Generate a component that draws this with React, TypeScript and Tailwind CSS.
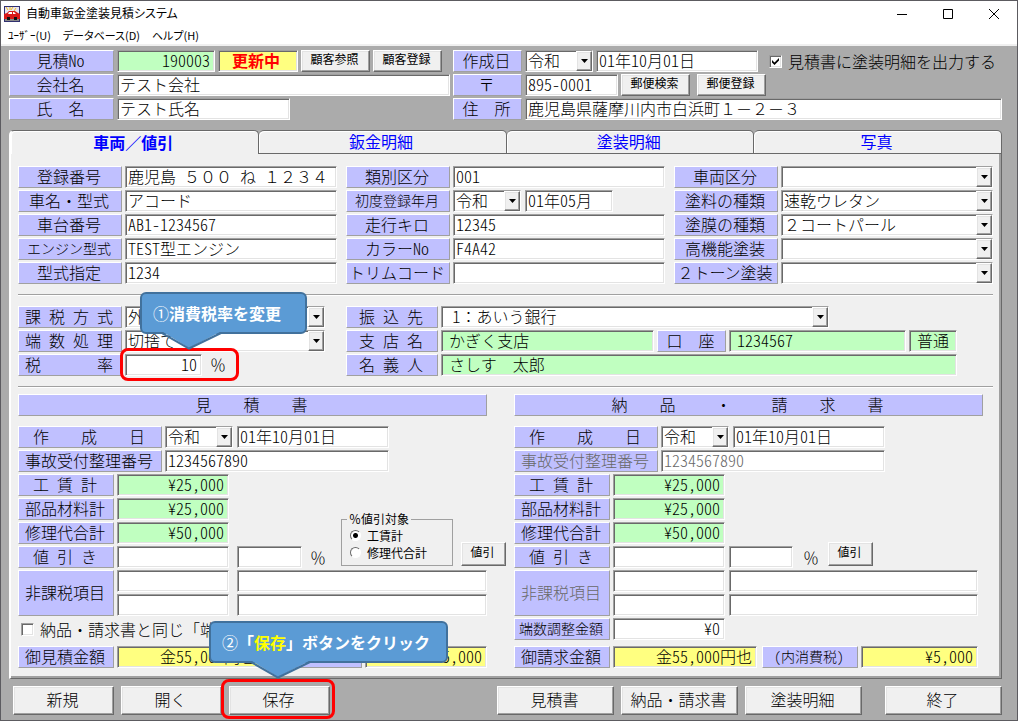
import { useState } from 'react';
import type { ButtonHTMLAttributes, InputHTMLAttributes, ReactNode } from 'react';
import clsx from 'clsx';

const TABS = ['車両／値引', '鈑金明細', '塗装明細', '写真'];

const RAISED =
  'border border-t-white border-l-white border-r-[#696969] border-b-[#696969] shadow-[inset_-1px_-1px_0_#a0a0a0,inset_1px_1px_0_#e3e3e3] bg-[#f0f0f0]';
const SUNKEN =
  'border border-t-[#a0a0a0] border-l-[#a0a0a0] border-r-white border-b-white shadow-[inset_1px_1px_0_#696969,inset_-1px_-1px_0_#e3e3e3]';
// half-width latin, digits and spaces (8px per character at 16px)
const HALF = "[font-feature-settings:'hwid']";

type CaptionProps = { htmlFor?: string; className?: string; wide?: boolean; children: ReactNode };

function Caption({ htmlFor, className, wide, children }: CaptionProps) {
  const cls = clsx(
    'flex items-center justify-center shrink-0 whitespace-pre pr-[2px] pb-[2px] bg-[#c0c0ff] border border-t-white border-l-white border-r-[#a0a0a0] border-b-[#a0a0a0]',
    !wide && HALF,
    className
  );
  return htmlFor ? (
    <label htmlFor={htmlFor} className={cls}>
      {children}
    </label>
  ) : (
    <div className={cls}>{children}</div>
  );
}

type FieldProps = InputHTMLAttributes<HTMLInputElement> & { tone?: string; pad?: string; wide?: boolean };

function Field({ className, tone = 'bg-white', pad = 'pl-[2px]', wide, ...rest }: FieldProps) {
  return (
    <input
      type="text"
      className={clsx(SUNKEN, tone, pad, !wide && HALF, 'h-[22px] min-w-0 pr-1 pb-[2px] leading-[18px]', className)}
      {...rest}
    />
  );
}

type SelectProps = { id?: string; value: string; className?: string; pad?: string; label?: string };

function Select({ id, value, className, pad = 'pl-[2px]', label }: SelectProps) {
  return (
    <div className={clsx('relative h-[22px]', className)}>
      <select
        id={id}
        aria-label={label}
        defaultValue={value}
        className={clsx(SUNKEN, pad, 'appearance-none block w-full h-[22px] pb-[2px] bg-white leading-[18px]')}
      >
        <option value={value}>{value}</option>
      </select>
      <span className={clsx(RAISED, 'absolute right-px top-px h-5 w-4 flex items-center justify-center pointer-events-none')}>
        <svg width="7" height="4" viewBox="0 0 7 4">
          <path d="M0 0h7L3.5 4z" />
        </svg>
      </span>
    </div>
  );
}

function Button({ className, children, ...rest }: ButtonHTMLAttributes<HTMLButtonElement>) {
  return (
    <button type="button" className={clsx(RAISED, 'shrink-0 whitespace-nowrap pr-[2px] pb-1', className)} {...rest}>
      {children}
    </button>
  );
}

function Check({ label, checked }: { label: string; checked?: boolean }) {
  return (
    <label className="flex items-center gap-[6px] whitespace-nowrap">
      <span className="relative size-[13px] shrink-0">
        <input type="checkbox" defaultChecked={checked} className={clsx(SUNKEN, 'peer appearance-none block size-[13px] bg-white')} />
        <svg className="absolute left-[3px] top-[3px] hidden peer-checked:block pointer-events-none" width="7" height="7" viewBox="0 0 7 7">
          <path d="M0 2l2.5 2.5L7 0v2.5L2.5 7 0 4.5z" />
        </svg>
      </span>
      {label}
    </label>
  );
}

function Row({ className, children }: { className?: string; children: ReactNode }) {
  return <div className={clsx('flex h-[22px] gap-[3px]', className)}>{children}</div>;
}

function Divider() {
  return <hr className="my-[10px] h-[2px] border-0 border-t border-[#a0a0a0] bg-white" />;
}

function Callout({ className, tip, children }: { className?: string; tip: string; children: ReactNode }) {
  return (
    <div
      className={clsx(
        'absolute z-10 flex h-[42px] items-center whitespace-nowrap rounded-md border-2 border-[#41719c] bg-[#5b9bd5] pl-[11px] font-bold text-white',
        className
      )}
    >
      {children}
      <svg className={clsx('absolute top-[38px]', tip)} width="60" height="18" viewBox="0 0 60 18">
        <path d="M1 0L27 16L58 0" fill="#5b9bd5" />
        <path d="M0 1L27 16.5L59 1" fill="none" stroke="#41719c" strokeWidth="2" />
      </svg>
    </div>
  );
}

const carRows = [
  { label: '登録番号', value: '鹿児島\u2002５００\u2002ね\u2002１２３４', wide: true },
  { label: '車名・型式', value: 'アコード' },
  { label: '車台番号', value: 'AB1-1234567' },
  { label: 'エンジン型式', value: 'TEST型エンジン', size: 'text-sm' },
  { label: '型式指定', value: '1234' },
];

const paintRows = [
  ['車両区分', ''],
  ['塗料の種類', '速乾ウレタン'],
  ['塗膜の種類', '２コートパール'],
  ['高機能塗装', ''],
  ['２トーン塗装', ''],
];

function Totals({ prefix }: { prefix: string }) {
  return (
    <>
      {[
        ['工 賃 計', '¥25,000'],
        ['部品材料計', '¥25,000'],
        ['修理代合計', '¥50,000'],
      ].map(([label, value]) => (
        <Row key={label}>
          <Caption htmlFor={prefix + label} className="w-24">
            {label}
          </Caption>
          <Field id={prefix + label} readOnly value={value} tone="bg-[#c0ffc0]" className="w-28 text-right" />
        </Row>
      ))}
    </>
  );
}

function IssueRows({ prefix, disabled }: { prefix: string; disabled?: boolean }) {
  return (
    <>
      <Row>
        <Caption htmlFor={prefix + 'date'} wide className="w-36">
          作　　成　　日
        </Caption>
        <Select label="元号" value="令和" className="w-[68px]" />
        <Field id={prefix + 'date'} defaultValue="01年10月01日" className="ml-px w-[152px]" />
      </Row>
      <Row>
        <Caption htmlFor={prefix + 'no'} className={clsx('w-36', disabled && 'text-[#686868]')}>
          事故受付整理番号
        </Caption>
        <Field id={prefix + 'no'} defaultValue="1234567890" disabled={disabled} className={clsx('w-56', disabled && 'text-[#686868]')} />
      </Row>
    </>
  );
}

function TaxFree({ gap, disabled }: { gap: string; disabled?: boolean }) {
  return (
    <div className="flex gap-[3px]">
      <Caption className={clsx('w-24', disabled && 'text-[#686868]')}>非課税項目</Caption>
      <div className="flex flex-1 flex-col gap-[2px]">
        {[1, 2].map((n) => (
          <div key={n} className={clsx('flex', gap)}>
            <Field aria-label={`非課税金額${n}`} className="w-28" />
            <Field aria-label={`非課税内容${n}`} className="flex-1" />
          </div>
        ))}
      </div>
    </div>
  );
}

function TitleBar() {
  return (
    <header className="bg-white text-xs border-b-2 border-[#f0f0f0] font-normal [font-feature-settings:'palt']">
      <div className="flex h-[25px] items-center pl-[3px]">
        <svg width="16" height="16" viewBox="0 0 16 16">
          <path d="M0 0h16v16H0z" fill="#303070" />
          <path d="M1 1h14v8H1z" fill="#e8e4f0" />
          <path d="M2 1l2 3M6 1v3M9 1L7 4M12 2l-2 3" stroke="#f0c020" />
          <path d="M0 8l3-1 2-2h6l3 2 2 1v5H0z" fill="#d81818" />
          <path d="M5 6h3v2H4zM9 6h1l2 2H9z" fill="#fff" />
          <path d="M1 13h14v2H1z" fill="#888" />
          <path d="M3 11h3v3H3zM10 11h3v3h-3z" fill="#111" />
        </svg>
        <h1 className="ml-[6px] flex-1 pb-px">自動車鈑金塗装見積システム</h1>
        <button type="button" aria-label="最小化" className="flex w-[46px] justify-center">
          <svg width="10" height="10" viewBox="0 0 10 10">
            <path d="M0 5.5h10" stroke="black" />
          </svg>
        </button>
        <button type="button" aria-label="最大化" className="flex w-[46px] justify-center">
          <svg width="10" height="10" viewBox="0 0 10 10">
            <path d="M.5.5h9v9h-9z" stroke="black" fill="none" />
          </svg>
        </button>
        <button type="button" aria-label="閉じる" className="flex w-[46px] justify-center">
          <svg width="10" height="10" viewBox="0 0 10 10">
            <path d="M0 0l10 10M10 0L0 10" stroke="black" />
          </svg>
        </button>
      </div>
      <nav className="flex h-[18px] items-center gap-3 pl-[7px] text-[11px]">
        <button type="button">ﾕｰｻﾞｰ(U)</button>
        <button type="button">データベース(D)</button>
        <button type="button">ヘルプ(H)</button>
      </nav>
    </header>
  );
}

function CustomerHeader() {
  return (
    <div className="flex gap-[3px]">
      <div className="flex w-[441px] shrink-0 flex-col gap-[2px]">
        <Row>
          <Caption htmlFor="no" className="w-[105px]">見積No</Caption>
          <Field id="no" defaultValue="190003" tone="bg-[#c0ffc0]" className="w-[98px] text-right" />
          <div className={clsx(SUNKEN, 'flex w-20 items-center justify-center bg-[#ffff80] pr-1 pb-[2px] font-bold text-[#ff0000]')}>更新中</div>
          <Button className="w-[69px] text-xs font-normal">顧客参照</Button>
          <Button className="w-[69px] text-xs font-normal">顧客登録</Button>
        </Row>
        <Row>
          <Caption htmlFor="company" className="w-[105px]">会社名</Caption>
          <Field id="company" defaultValue="テスト会社" className="flex-1" />
        </Row>
        <Row>
          <Caption htmlFor="name" wide className="w-[105px]">氏　名</Caption>
          <Field id="name" defaultValue="テスト氏名" className="w-[173px]" />
        </Row>
      </div>
      <div className="flex flex-1 flex-col gap-[2px]">
        <Row>
          <Caption htmlFor="date" className="w-[69px]">作成日</Caption>
          <Select label="元号" value="令和" className="w-[68px]" />
          <Field id="date" defaultValue="01年10月01日" className="mr-2 w-[162px]" />
          <Check label="見積書に塗装明細を出力する" checked />
        </Row>
        <Row>
          <Caption htmlFor="zip" wide className="w-[69px]">〒</Caption>
          <Field id="zip" defaultValue="895-0001" className="w-[93px]" />
          <Button className="w-[69px] text-xs font-normal">郵便検索</Button>
          <Button className="ml-1 w-[69px] text-xs font-normal">郵便登録</Button>
        </Row>
        <Row>
          <Caption htmlFor="address" wide className="w-[69px]">住　所</Caption>
          <Field id="address" wide defaultValue="鹿児島県薩摩川内市白浜町１－２－３" className="flex-1" />
        </Row>
      </div>
    </div>
  );
}

function VehicleSection() {
  return (
    <section className="grid grid-cols-3 gap-[9px]">
      <div className="flex flex-col gap-[2px]">
        {carRows.map(({ label, value, size, wide }) => (
          <Row key={label}>
            <Caption htmlFor={label} className={clsx('w-[104px]', size)}>{label}</Caption>
            <Field id={label} defaultValue={value} wide={wide} className="flex-1" />
          </Row>
        ))}
      </div>
      <div className="flex flex-col gap-[2px]">
        <Row>
          <Caption htmlFor="class" className="w-[104px]">類別区分</Caption>
          <Field id="class" defaultValue="001" className="flex-1" />
        </Row>
        <Row>
          <Caption htmlFor="first" className="w-[104px] text-sm">初度登録年月</Caption>
          <Select label="元号" value="令和" className="w-[68px]" />
          <Field id="first" defaultValue="01年05月" className="ml-px w-[88px]" />
        </Row>
        <Row>
          <Caption htmlFor="km" className="w-[104px]">走行キロ</Caption>
          <Field id="km" defaultValue="12345" className="flex-1" />
        </Row>
        <Row>
          <Caption htmlFor="color" className="w-[104px]">カラーNo</Caption>
          <Field id="color" defaultValue="F4A42" className="flex-1" />
        </Row>
        <Row>
          <Caption htmlFor="trim" className="w-[104px]">トリムコード</Caption>
          <Field id="trim" className="flex-1" />
        </Row>
      </div>
      <div className="flex flex-col gap-[2px]">
        {paintRows.map(([label, value]) => (
          <Row key={label}>
            <Caption htmlFor={label} wide className="w-[104px]">{label}</Caption>
            <Select id={label} value={value} className="flex-1" />
          </Row>
        ))}
      </div>
    </section>
  );
}

function TaxSection() {
  return (
    <section className="grid grid-cols-3 gap-[9px]">
      <div className="flex flex-col gap-[2px]">
        <Row>
          <Caption htmlFor="tax" className="w-[104px]">課 税 方 式</Caption>
          <Select id="tax" value="外税" className="w-[200px]" />
        </Row>
        <Row>
          <Caption htmlFor="round" className="w-[104px]">端 数 処 理</Caption>
          <Select id="round" value="切捨て" className="w-[200px]" />
        </Row>
        <Row>
          <Caption htmlFor="rate" wide className="w-[104px]">{'税　　　\u2002率'}</Caption>
          <div className="relative flex items-center gap-2">
            <Field id="rate" defaultValue="10" className="w-[77px] text-right" />
            <span className="pb-[2px]">％</span>
            <div className="pointer-events-none absolute -left-[5px] -top-[6px] h-[33px] w-[119px] rounded-lg border-3 border-[#ff0000]" />
            <Callout className="-top-[62px] left-[15px] w-[167px]" tip="left-[20px]">
              <span className="font-normal">①</span>消費税率を変更
            </Callout>
          </div>
        </Row>
      </div>
      <div className="col-span-2 flex flex-col gap-[2px] pr-9">
        <Row>
          <Caption htmlFor="bank" className="w-[92px]">振 込 先</Caption>
          <Select id="bank" value="1：あいう銀行" pad="pl-[10px]" className="w-[388px]" />
        </Row>
        <Row>
          <Caption htmlFor="branch" className="w-[92px]">支 店 名</Caption>
          <Field id="branch" readOnly value="かぎく支店" tone="bg-[#c0ffc0]" pad="pl-[7px]" className="flex-1" />
          <Caption htmlFor="account" wide className="w-[69px]">口　座</Caption>
          <Field id="account" readOnly value="1234567" tone="bg-[#c0ffc0]" pad="pl-[7px]" className="w-[177px]" />
          <Field aria-label="口座種別" readOnly value="普通" tone="bg-[#c0ffc0]" pad="pl-1" className="w-12 text-center" />
        </Row>
        <Row>
          <Caption htmlFor="holder" className="w-[92px]">名 義 人</Caption>
          <Field id="holder" wide readOnly value="さしす　太郎" tone="bg-[#c0ffc0]" pad="pl-[7px]" className="flex-1" />
        </Row>
      </div>
    </section>
  );
}

function EstimateColumn() {
  return (
    <div className="flex flex-col gap-[2px]">
      <Caption wide className="mb-2 h-[22px]">見　　積　　書</Caption>
      <IssueRows prefix="est-" />
      <div className="flex items-end">
        <div className="flex shrink-0 flex-col gap-[2px]">
          <Totals prefix="est-" />
          <Row className="items-center">
            <Caption htmlFor="est-discount" className="h-full w-24">値 引 き</Caption>
            <Field id="est-discount" className="w-28" />
            <Field aria-label="値引率" className="ml-[5px] w-[65px]" />
            <span className="ml-[5px]">％</span>
          </Row>
        </div>
        <fieldset className="mb-[2px] ml-[15px] w-28 shrink-0 border border-[#a0a0a0] pt-[2px] pb-1 text-xs font-normal">
          <legend className="ml-[5px] px-[2px] leading-3">％値引対象</legend>
          {['工賃計', '修理代合計'].map((name, i) => (
            <label key={name} className="flex h-[17px] items-center gap-[6px] pl-2">
              <input
                type="radio"
                name="target"
                defaultChecked={i === 0}
                className="size-[11px] appearance-none rounded-full border border-t-[#696969] border-l-[#696969] border-r-white border-b-white bg-white checked:bg-[radial-gradient(black_2px,white_3px)]"
              />
              {name}
            </label>
          ))}
        </fieldset>
        <Button className="mb-[2px] ml-2 h-6 w-[45px] text-xs font-normal">値引</Button>
      </div>
      <TaxFree gap="gap-2" />
      <div className="flex h-[22px] items-center pl-[3px]">
        <Check label="納品・請求書と同じ「端" />
      </div>
      <Row className="mt-1">
        <Caption htmlFor="est-total" className="w-24">御見積金額</Caption>
        <Field id="est-total" readOnly value="金55,000円也" tone="bg-[#ffff80]" className="w-36 text-right" />
        <Caption className="ml-[2px] w-24"> </Caption>
        <Field aria-label="内消費税" readOnly value="¥5,000" tone="bg-[#ffff80]" className="flex-1 text-right" />
      </Row>
    </div>
  );
}

function InvoiceColumn() {
  return (
    <div className="flex flex-col gap-[2px]">
      <Caption wide className="mb-2 h-[22px]">{'納　　品　　\u2002・　　\u2002請　　求　　書'}</Caption>
      <IssueRows prefix="inv-" disabled />
      <Totals prefix="inv-" />
      <Row className="items-center">
        <Caption htmlFor="inv-discount" className="h-full w-24">値 引 き</Caption>
        <Field id="inv-discount" className="w-28" />
        <Field aria-label="値引率" className="ml-px w-16" />
        <span className="ml-[7px]">％</span>
        <Button className="mb-[6px] ml-[6px] h-6 w-[45px] text-xs font-normal">値引</Button>
      </Row>
      <div className="flex flex-col pr-[5px]">
        <TaxFree gap="gap-1" disabled />
      </div>
      <Row>
        <Caption htmlFor="adjust" className="w-24 text-sm">端数調整金額</Caption>
        <Field id="adjust" defaultValue="¥0" className="w-28 text-right" />
      </Row>
      <Row className="mt-1 pr-[5px]">
        <Caption htmlFor="inv-total" className="w-24">御請求金額</Caption>
        <Field id="inv-total" readOnly value="金55,000円也" tone="bg-[#ffff80]" className="w-36 text-right" />
        <Caption htmlFor="inv-tax" className="ml-[2px] w-24 text-sm">(内消費税)</Caption>
        <Field id="inv-tax" readOnly value="¥5,000" tone="bg-[#ffff80]" className="flex-1 text-right" />
      </Row>
    </div>
  );
}

export default function App() {
  const [tab, setTab] = useState(0);

  return (
    <div className="min-h-screen border border-[#5c5b60] bg-[#ababab] font-['Noto_Sans_CJK_JP',sans-serif] text-base leading-[18px] font-light text-black">
      <TitleBar />
      <main className="pt-1 pr-[15px] pb-[5px] pl-2">
        <CustomerHeader />

        {/* Tabs */}
        <div role="tablist" className="mt-[10px] flex">
          {TABS.map((name, i) => (
            <button
              key={name}
              type="button"
              role="tab"
              aria-selected={i === tab}
              onClick={() => setTab(i)}
              className={clsx(
                'h-6 flex-1 rounded-t-[5px] border-t border-r border-[#696969] bg-[#f0f0f0] pr-[2px] pb-[2px] text-[#0000ff] shadow-[inset_1px_1px_0_white]',
                i === tab ? 'border-l-2 border-l-white font-bold' : 'border-b font-normal'
              )}
            >
              {name}
            </button>
          ))}
        </div>
        <div
          role="tabpanel"
          className="border-r border-b border-l-2 border-[#696969] border-l-white bg-[#f0f0f0] pt-3 pr-2 pb-[10px] pl-[7px] shadow-[inset_-2px_-2px_0_#a0a0a0]"
        >
          <VehicleSection />
          <Divider />
          <TaxSection />
          <Divider />
          <section className="-mt-1 grid grid-cols-2 gap-[27px] pr-[10px]">
            <EstimateColumn />
            <InvoiceColumn />
          </section>
        </div>

        {/* Footer buttons */}
        <footer className="mt-[7px] flex justify-between pl-1">
          <div className="flex gap-[7px]">
            <Button className="h-[29px] w-[101px]">新規</Button>
            <Button className="h-[29px] w-[101px]">開く</Button>
            <div className="relative">
              <Button className="h-[29px] w-[101px]">保存</Button>
              <div className="pointer-events-none absolute -left-2 -top-[7px] h-10 w-[114px] rounded-lg border-3 border-[#ff0000]" />
              <Callout className="-top-[65px] -left-5 w-[239px]" tip="left-[40px]">
                <span className="font-normal">②</span>「<span className="text-[#ffff00]">保存</span>」ボタンをクリック
              </Callout>
            </div>
          </div>
          <div className="flex gap-[7px]">
            <Button className="h-[29px] w-[117px]">見積書</Button>
            <Button className="h-[29px] w-[117px]">納品・請求書</Button>
            <Button className="h-[29px] w-[117px]">塗装明細</Button>
            <Button className="ml-4 h-[29px] w-[117px]">終了</Button>
          </div>
        </footer>
      </main>
    </div>
  );
}
